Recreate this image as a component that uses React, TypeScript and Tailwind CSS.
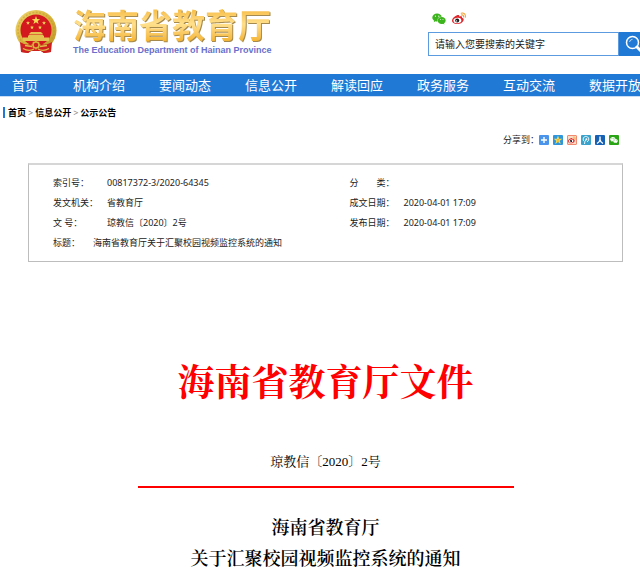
import { FaWeixin } from 'react-icons/fa';

const navItems = ['机构介绍', '要闻动态', '信息公开', '解读回应', '政务服务', '互动交流', '数据开放'];

const gearTeeth = [0, 45, 90, 135, 180, 225, 270, 315];

function Star({ x, y, r }: { x: number; y: number; r: number }) {
  return (
    <path
      transform={`translate(${x} ${y}) scale(${r})`}
      d="M0-1 .24-.32.95-.31.38.12.59.81 0 .4-.59.81-.38.12-.95-.31-.24-.32Z"
      fill="#f7dc55"
    />
  );
}

function Emblem() {
  return (
    <svg viewBox="0 0 42 44" className="mt-1 h-11 w-[42px] shrink-0" aria-label="国徽" role="img">
      <defs>
        <linearGradient id="wreath" x1="0" y1="0" x2="1" y2="1">
          <stop offset="0" stopColor="#f0d874" />
          <stop offset=".5" stopColor="#d9b43a" />
          <stop offset="1" stopColor="#c0942a" />
        </linearGradient>
      </defs>
      <path d="M6 30 6 42 13 43 16 41 26 41 29 43 36 42 36 30Z" fill="#c81a1c" />
      <circle cx="21" cy="20.5" r="20.5" fill="url(#wreath)" />
      <circle cx="21" cy="20.5" r="18" fill="none" stroke="#b88f28" strokeWidth="1.5" strokeDasharray="2 1.5" opacity=".4" />
      <circle cx="21" cy="20" r="15.5" fill="#d3191d" />
      <Star x={21} y={10.5} r={4.4} />
      <Star x={13} y={13} r={2.1} />
      <Star x={29} y={13} r={2.1} />
      <Star x={17} y={17.5} r={2.1} />
      <Star x={25} y={17.5} r={2.1} />
      <path d="M14 24 16 22H26L28 24ZM13 26 14.500 24.500H27.500L29 26V27.500H34V31H8V27.500H13Z" fill="#e5c350" />
      <path d="M5 32Q13 37 18 32.500L21 31.500 24 32.500Q29 37 37 32L36 42 29 43 26 41H16L13 43 6 42Z" fill="#cf2020" />
      <g transform="translate(21 35)">
        <circle r="3" fill="none" stroke="#d9b43a" strokeWidth="1.5" />
        {gearTeeth.map((angle) => (
          <rect key={angle} x="-.6" y="-4.5" width="1.2" height="1.5" fill="#d9b43a" transform={`rotate(${angle})`} />
        ))}
      </g>
      <path d="M8 38.500Q14 42 19 39M34 38.500Q28 42 23 39M10 35.500 17 36.500M32 35.500 25 36.500" fill="none" stroke="#e0bd48" strokeWidth="1.3" />
    </svg>
  );
}

function WeiboEye({ className }: { className: string }) {
  return (
    <svg viewBox="0 0 14 12" className={className} aria-hidden="true">
      <path d="M5 2.800C6.500 2 7.600 2.500 7.200 4 9 3.300 10.600 3.600 10 5.200 11.500 5.600 12 6.700 11.500 8 10.600 10.400 8 11.600 5.300 11.600 2.400 11.600 0 10.200 0 8 0 6 2.500 3.900 5 2.800Z" fill="#e0262b" />
      <ellipse cx="5.4" cy="8" rx="4" ry="2.7" fill="#fff" transform="rotate(-8 5.4 8)" />
      <circle cx="5.2" cy="8.1" r="2" fill="#161616" />
      <circle cx="4.6" cy="8.4" r=".7" fill="#fff" />
      <path d="M9.200.7C12-.1 14 2 13.200 4.800M9.400 2.500C10.900 2.100 11.900 3.200 11.500 4.500" fill="none" stroke="#f5a12e" strokeWidth="1.1" strokeLinecap="round" />
    </svg>
  );
}

function SearchIcon() {
  return (
    <svg viewBox="0 0 18 18" className="size-[18px] shrink-0" fill="none" stroke="#fff" aria-hidden="true">
      <circle cx="7.5" cy="7.5" r="6" strokeWidth="1.5" />
      <path d="M4.500 7Q5 4.500 7.500 4.300" strokeWidth="1" opacity=".7" />
      <path d="M12 12 16 16" strokeWidth="3" strokeLinecap="round" />
    </svg>
  );
}

function ShareLinks() {
  return (
    <div className="flex items-center gap-1">
      <a href="#more" aria-label="更多" className="size-[10px] rounded-[1px] bg-[#4b94ec]">
        <svg viewBox="0 0 10 10"><path d="M5 2V8M2 5H8" stroke="#fff" strokeWidth="1.4" /></svg>
      </a>
      <a href="#qzone" aria-label="QQ空间" className="size-[10px] rounded-[1px] bg-[#2d96dc]">
        <svg viewBox="0 0 10 10">
          <Star x={5} y={5.2} r={4.6} />
          <path d="M3.800 4.400H6L4.200 6.300H6.400" fill="none" stroke="#e79a20" strokeWidth=".6" />
        </svg>
      </a>
      <a href="#weibo" aria-label="新浪微博" className="size-[10px] rounded-[1px] border border-[#f08a70] bg-[#fbdcc4]">
        <WeiboEye className="size-2" />
      </a>
      <a href="#tqq" aria-label="腾讯微博" className="size-[10px] rounded-[1px] bg-[#3ba3cb]">
        <svg viewBox="0 0 10 10" fill="none" stroke="#fff">
          <path d="M3 6.200A2.800 2.800 0 1 1 6 6.800M3.500 9Q3.300 6.500 5.300 4.500" strokeWidth=".9" />
          <circle cx="5.4" cy="4.2" r=".8" fill="#fff" strokeWidth=".4" />
        </svg>
      </a>
      <a href="#renren" aria-label="人人网" className="size-[10px] rounded-[1px] bg-[#1761b5]">
        <svg viewBox="0 0 10 10"><path d="M5 1.500V4.500Q4.700 7 2 8.500M5 4.500Q5.300 7 8 8.500" fill="none" stroke="#fff" strokeWidth="1.4" /></svg>
      </a>
      <a href="#weixin" aria-label="微信" className="flex size-[10px] items-center justify-center rounded-[1px] bg-[#2aa515]">
        <FaWeixin className="size-2 text-white" />
      </a>
    </div>
  );
}

export default function App() {
  return (
    <div className="min-h-screen overflow-x-hidden bg-white font-['Noto_Sans','Noto_Sans_CJK_SC',sans-serif] text-[9px] text-[#222]" lang="zh-CN">
      <header className="flex h-[74px] justify-between pl-[15px]">
        <a href="#home" className="flex items-start gap-4 pt-1.5">
          <Emblem />
          <div className="whitespace-nowrap">
            <h1 className="bg-linear-to-b from-[#f5b52c] via-[#ffe08c] to-[#f4b32a] bg-clip-text font-['Noto_Sans_CJK_SC',sans-serif] text-[33px]/[36px] font-bold text-transparent drop-shadow-[1px_1px_0px_#a58a50]">
              海南省教育厅
            </h1>
            <p className="mt-0.5 font-['Liberation_Sans',sans-serif] text-[9px]/[12px] font-bold text-[#6a70cc]">
              The Education Department of Hainan Province
            </p>
          </div>
        </a>
        <div className="w-[212px] pt-3">
          <div className="flex h-5 items-start gap-1.5 pl-1">
            <a href="#wechat" aria-label="微信"><FaWeixin className="size-[14px] text-[#3cb41c]" /></a>
            <a href="#weibo" aria-label="微博"><WeiboEye className="h-[13px] w-[14px]" /></a>
          </div>
          <form className="flex h-6">
            <input
              type="text"
              aria-label="搜索"
              placeholder="请输入您要搜索的关键字"
              className="min-w-0 flex-1 border border-[#5d9be0] px-1.5 text-[10px] placeholder:text-[#222] outline-none"
            />
            <button type="button" aria-label="搜索" className="flex w-[21px] items-center overflow-hidden bg-[#2179d6] pl-1.5">
              <SearchIcon />
            </button>
          </form>
        </div>
      </header>

      <nav className="flex h-[22px] items-center overflow-hidden bg-[#2179d6] text-[13px]/[22px] whitespace-nowrap text-white shadow-[0_1px_0_#c9def5]">
        <a href="#home" className="w-14 shrink-0 pl-3">首页</a>
        {navItems.map((item) => (
          <a key={item} href="#nav" className="w-[86px] shrink-0 text-center">{item}</a>
        ))}
      </nav>

      <div className="mt-[11px] ml-[3px] flex h-[11px] items-center gap-0.5 border-l-2 border-[#2179d6] pl-[3px] font-bold text-black">
        <a href="#home">首页</a>
        <span className="font-normal text-[#888]">&gt;</span>
        <a href="#info">信息公开</a>
        <span className="font-normal text-[#888]">&gt;</span>
        <a href="#notice">公示公告</a>
      </div>

      <div className="mt-3 flex h-5 items-center justify-end pr-[21px]">
        <span>分享到：</span>
        <ShareLinks />
      </div>

      <main className="mt-[13px] mr-[17px] ml-7">
        <dl className="grid grid-cols-2 border border-t-2 border-[#bdbdbd] border-t-[#d6d6d6] px-6 py-2 leading-5">
          <div className="flex"><dt className="w-[54px]">索引号：</dt><dd>00817372-3/2020-64345</dd></div>
          <div className="flex pl-6"><dt className="w-[54px]">分　　类：</dt><dd /></div>
          <div className="flex"><dt className="w-[54px]">发文机关：</dt><dd>省教育厅</dd></div>
          <div className="flex pl-6"><dt className="w-[54px]">成文日期：</dt><dd>2020-04-01 17:09</dd></div>
          <div className="flex"><dt className="w-[54px]">文 号：</dt><dd>琼教信〔2020〕2号</dd></div>
          <div className="flex pl-6"><dt className="w-[54px]">发布日期：</dt><dd>2020-04-01 17:09</dd></div>
          <div className="col-span-2 flex"><dt className="w-10">标题：</dt><dd>海南省教育厅关于汇聚校园视频监控系统的通知</dd></div>
        </dl>

        <article className="pt-[98px] text-center font-['Liberation_Serif','Noto_Serif_CJK_SC','Noto_Sans_CJK_SC',serif] text-black">
          <p className="text-[37px]/[48px] font-bold text-[#fe0000]">海南省教育厅文件</p>
          <p className="mt-11 text-[13px]/[20px]">琼教信〔2020〕2号</p>
          <hr className="mx-auto mt-3.5 max-w-[376px] border-t-2 border-[#fe0000]" />
          <h2 className="mt-[25px] text-[18px]/[31px] font-semibold">
            海南省教育厅<br />关于汇聚校园视频监控系统的通知
          </h2>
        </article>
      </main>
    </div>
  );
}
